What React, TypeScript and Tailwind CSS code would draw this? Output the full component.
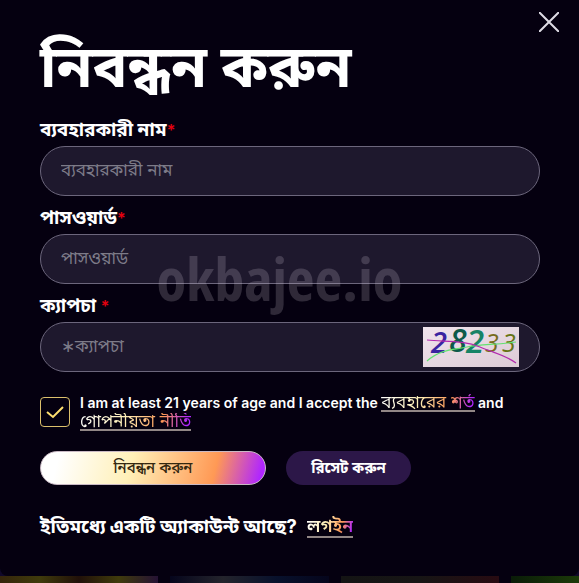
import type { ReactNode } from 'react';

const gradientText =
  'bg-[linear-gradient(104deg,#ffffff_0%,#fff0b8_40%,#ff9955_73%,#b026ff_95%)] bg-clip-text text-transparent';

const termsLink = `inline-block border-b-2 border-[#928786] text-[17px] leading-[16px] font-normal ${gradientText}`;

const fieldBox =
  'flex h-[50px] items-center rounded-full border border-[#6c667c] bg-[#1e182d] px-5';

const fieldInput =
  'min-w-0 flex-1 bg-transparent text-[17px] text-white outline-none placeholder:text-[#7d7b88]';

function Field({ id, label, children }: { id: string; label: string; children: ReactNode }) {
  return (
    <div>
      <label htmlFor={id} className="flex h-[38px] items-center pt-1.5 text-[19px] leading-6 font-bold text-white">
        {label}
        <span className="text-[16px] font-semibold text-[#e3000f]">*</span>
      </label>
      <div className={fieldBox}>{children}</div>
    </div>
  );
}

function Captcha() {
  return (
    <svg viewBox="0 0 96 40" className="h-10 w-24 shrink-0 overflow-visible" role="img" aria-label="28233">
      <defs>
        <linearGradient id="captcha-bg" x1="0" y1="0" x2="1" y2="1">
          <stop offset="0" stopColor="#f0e4ec" />
          <stop offset="1" stopColor="#dccbd6" />
        </linearGradient>
      </defs>
      <rect width="96" height="40" fill="url(#captcha-bg)" />
      <g fontFamily="'Open Sans', sans-serif" fontStyle="italic">
        <text x="8" y="26" fontSize="29" fontWeight="600" fill="#3a24a0">2</text>
        <text x="26" y="25" fontSize="32" fontWeight="600" fill="#0d5a4a">8</text>
        <text x="43" y="26" fontSize="33" fontWeight="600" fill="#168366">2</text>
        <text x="62" y="25" fontSize="25" fill="#776b1c">3</text>
        <text x="79" y="25" fontSize="25" fill="#667314">3</text>
      </g>
      <path d="M4 34C18 22 30 23 44 20S72 18 93 15" fill="none" stroke="#63e070" strokeWidth="1.2" />
      <path d="M4 13C22 15 40 13 57 20S84 29 93 36" fill="none" stroke="#b32aae" strokeWidth="1.2" />
    </svg>
  );
}

export default function App() {
  return (
    <div className="flex min-h-screen flex-col bg-[#10082a] font-['Inter','Noto_Sans_Bengali','Noto_Sans',sans-serif]">
      <main className="relative flex flex-1 flex-col rounded-b-lg bg-[#050010] pt-6 pr-[39px] pl-10">
        <button type="button" aria-label="Close" className="absolute top-3 right-5 text-[#dedbe4]">
          <svg viewBox="0 0 20 20" className="size-5" fill="none" stroke="currentColor" strokeWidth="2">
            <path d="M0 0L20 20M20 0L0 20" />
          </svg>
        </button>

        <h1 className="h-[84px] text-[58px] leading-[84px] font-bold whitespace-nowrap text-white">নিবন্ধন করুন</h1>

        <form className="flex flex-col">
          <Field id="username" label="ব্যবহারকারী নাম">
            <input id="username" type="text" placeholder="ব্যবহারকারী নাম" className={fieldInput} />
          </Field>
          <Field id="password" label="পাসওয়ার্ড">
            <input id="password" type="password" placeholder="পাসওয়ার্ড" className={fieldInput} />
          </Field>
          <Field id="captcha" label={'ক্যাপচা\u00a0'}>
            <input id="captcha" type="text" placeholder="∗ক্যাপচা" className={fieldInput} />
            <Captcha />
          </Field>

          <div className="mt-[21px] flex items-center gap-2.5">
            <span className="relative size-[30px] shrink-0">
              <input
                id="terms"
                type="checkbox"
                defaultChecked
                className="size-full appearance-none rounded border border-[#dcc06c]"
              />
              <svg
                viewBox="0 0 30 30"
                className="pointer-events-none absolute inset-0"
                fill="none"
                stroke="#ffdf70"
                strokeWidth="2"
              >
                <path d="M7 15L13 20L23 10" />
              </svg>
            </span>
            <label htmlFor="terms" className="text-[14px] leading-[19px] font-semibold text-white">
              I am at least 21 years of age and I accept the{' '}
              <a href="#terms" className={termsLink}>
                ব্যবহারের শর্ত
              </a>{' '}
              and{' '}
              <a href="#privacy" className={termsLink}>
                গোপনীয়তা নীতি
              </a>
            </label>
          </div>

          <div className="mt-5 flex gap-5">
            <button
              type="submit"
              className="h-[34px] w-[226px] rounded-full border border-[#c9b9c4] bg-[linear-gradient(104deg,#ffffff_8%,#fff0b8_40%,#ff9955_77%,#b026ff_97%)] text-[15px] font-medium text-[#332710]"
            >
              নিবন্ধন করুন
            </button>
            <button type="reset" className="h-[34px] w-[125px] rounded-full bg-[#2c1748] text-[15px] font-bold text-white">
              রিসেট করুন
            </button>
          </div>

          <p className="mt-7 flex items-center gap-2.5 text-[19px] leading-7 font-bold text-white">
            ইতিমধ্যে একটি অ্যাকাউন্ট আছে?
            <a href="#login" className={`border-b-2 border-[#928786] text-[18px] leading-5 font-semibold ${gradientText}`}>
              লগইন
            </a>
          </p>
        </form>

        <div className="pointer-events-none absolute inset-x-0 top-[246px] pr-5 text-center font-['Open_Sans_Condensed','Open_Sans',sans-serif] text-[60px] leading-[64px] font-medium text-[#d8cfdc]/20">
          okbajee.io
        </div>
      </main>

      <div className="flex h-[7px] shrink-0 gap-3 bg-[#050010]">
        <div className="flex-1 bg-[linear-gradient(90deg,#35250b,#403b0c,#211009,#403b0c,#251234)]" />
        <div className="flex-1 bg-[linear-gradient(90deg,#05051c,#24242c,#08112c,#05051c)]" />
        <div className="flex-1 bg-[linear-gradient(90deg,#141414,#171515,#280b12)]" />
        <div className="w-[68px] bg-[linear-gradient(90deg,#0a1c08,#1c3a09)]" />
      </div>
    </div>
  );
}
